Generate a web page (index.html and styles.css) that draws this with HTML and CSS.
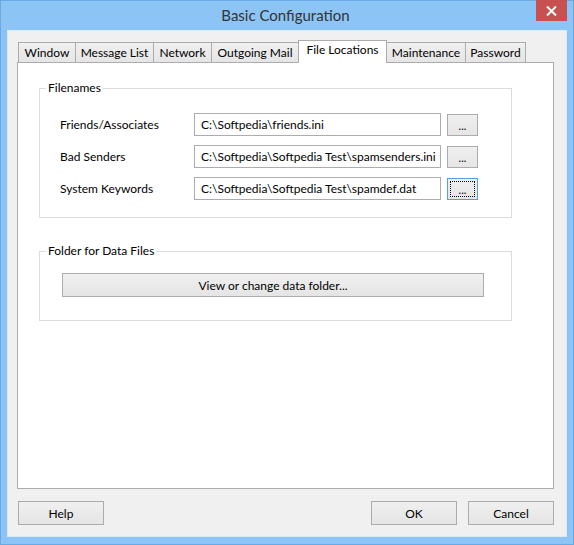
FILE: index.html
```html
<!DOCTYPE html>
<html>
<head>
<meta charset="utf-8">
<link rel="stylesheet" href="styles.css">
</head>
<body>
<div class="window">
  <div class="titlebar">
    <span class="title">Basic Configuration</span>
    <div class="close">
      <svg width="11" height="10" viewBox="0 0 11 10"><path d="M1 0.5 L10 9.5 M10 0.5 L1 9.5" stroke="#fff" stroke-width="2"/></svg>
    </div>
  </div>
  <div class="client">
    <div class="tabs">
      <div class="tab t-window">Window</div>
      <div class="tab t-msg">Message List</div>
      <div class="tab t-net">Network</div>
      <div class="tab t-out">Outgoing Mail</div>
      <div class="tab active t-file">File Locations</div>
      <div class="tab t-maint">Maintenance</div>
      <div class="tab t-pass">Password</div>
    </div>
    <div class="panel">
      <fieldset class="group">
        <legend>Filenames</legend>
        <div class="files">
          <div class="row">
            <span class="label">Friends/Associates</span>
            <div class="input">C:\Softpedia\friends.ini</div>
            <div class="btn dots">...</div>
          </div>
          <div class="row">
            <span class="label">Bad Senders</span>
            <div class="input">C:\Softpedia\Softpedia Test\spamsenders.ini</div>
            <div class="btn dots">...</div>
          </div>
          <div class="row">
            <span class="label">System Keywords</span>
            <div class="input">C:\Softpedia\Softpedia Test\spamdef.dat</div>
            <div class="btn dots focused"><span class="focusrect">...</span></div>
          </div>
        </div>
      </fieldset>
      <fieldset class="group second">
        <legend>Folder for Data Files</legend>
        <div class="folder">
          <div class="btn wide">View or change data folder...</div>
        </div>
      </fieldset>
    </div>
    <div class="footer">
      <div class="btn dlg">Help</div>
      <div class="spacer"></div>
      <div class="btn dlg">OK</div>
      <div class="btn dlg">Cancel</div>
    </div>
  </div>
</div>
</body>
</html>
```
FILE: styles.css
```css
html, body {
  margin: 0;
  padding: 0;
  background: #8cc5f5;
}
body {
  font-family: "Lato", "Liberation Sans", sans-serif;
  font-size: 12px;
  color: #000;
}
.window {
  width: 574px;
  height: 545px;
  box-sizing: border-box;
  border: 1px solid #6ba9e2;
  background: #8cc5f5;
  display: flex;
  flex-direction: column;
}
.titlebar {
  position: relative;
  height: 29px;
  display: flex;
  align-items: center;
  justify-content: center;
}
.title {
  font-size: 15px;
  color: #333;
  margin-top: -2px;
  margin-left: -3px;
}
.close {
  position: absolute;
  top: -1px;
  right: 6px;
  width: 31px;
  height: 21px;
  background: #c75050;
  display: flex;
  align-items: center;
  justify-content: center;
}
.client {
  flex: 1;
  margin: 0 6px 7px 6px;
  border: 1px solid #dbe9f6;
  background: #f0f0f0;
  display: flex;
  flex-direction: column;
}
.tabs {
  margin: 9px 0 0 10px;
  height: 22px;
  display: flex;
  align-items: flex-end;
}
.tab {
  box-sizing: border-box;
  height: 20px;
  border: 1px solid #acacac;
  border-bottom: none;
  background: linear-gradient(#f0f0f0, #e5e5e5);
  text-align: center;
  line-height: 19px;
  margin-left: -1px;
  white-space: nowrap;
}
.tab.active {
  position: relative;
  z-index: 2;
  height: 23px;
  margin-bottom: -1px;
  background: #fff;
  line-height: 18px;
}
.t-window { width: 58px; margin-left: 0; }
.t-msg { width: 79px; }
.t-net { width: 59px; }
.t-out { width: 88px; }
.t-file { width: 89px; }
.t-maint { width: 80px; }
.t-pass { width: 61px; }
.panel {
  margin: 0 12px 0 9px;
  height: 427px;
  box-sizing: border-box;
  border: 1px solid #acacac;
  background: #fff;
  display: flex;
  flex-direction: column;
}
.group {
  margin: 17px 0 0 21px;
  width: 473px;
  box-sizing: border-box;
  border: 1px solid #dcdcdc;
  padding: 0;
  min-width: 0;
}
.group legend {
  margin-left: 6px;
  padding: 0 2px;
  line-height: 16px;
}
.files {
  padding: 17px 0 17px 20px;
  display: flex;
  flex-direction: column;
  gap: 9px;
}
.row {
  display: flex;
  align-items: center;
  height: 23px;
}
.label {
  width: 134px;
}
.input {
  box-sizing: border-box;
  width: 247px;
  height: 23px;
  border: 1px solid #abadb3;
  background: #fff;
  padding-left: 6px;
  line-height: 21px;
  white-space: nowrap;
  overflow: hidden;
}
.btn {
  box-sizing: border-box;
  border: 1px solid #acacac;
  background: linear-gradient(#f0f0f0, #e5e5e5);
  display: flex;
  align-items: center;
  justify-content: center;
}
.dots {
  width: 31px;
  height: 22px;
  margin-left: 6px;
  font-size: 11px;
  line-height: 1;
  padding-top: 2px;
}
.focused {
  border-color: #569de5;
  padding: 2px;
}
.focusrect {
  flex: 1;
  align-self: stretch;
  border: 1px dotted #000;
  display: flex;
  align-items: center;
  justify-content: center;
  padding-top: 2px;
}
.second {
  margin-top: 25px;
}
.folder {
  padding: 14px 0 23px 22px;
}
.wide {
  width: 422px;
  height: 24px;
}
.footer {
  margin: 12px 12px 0 10px;
  display: flex;
  gap: 11px;
}
.spacer {
  flex: 1;
}
.dlg {
  width: 86px;
  height: 24px;
}
```
